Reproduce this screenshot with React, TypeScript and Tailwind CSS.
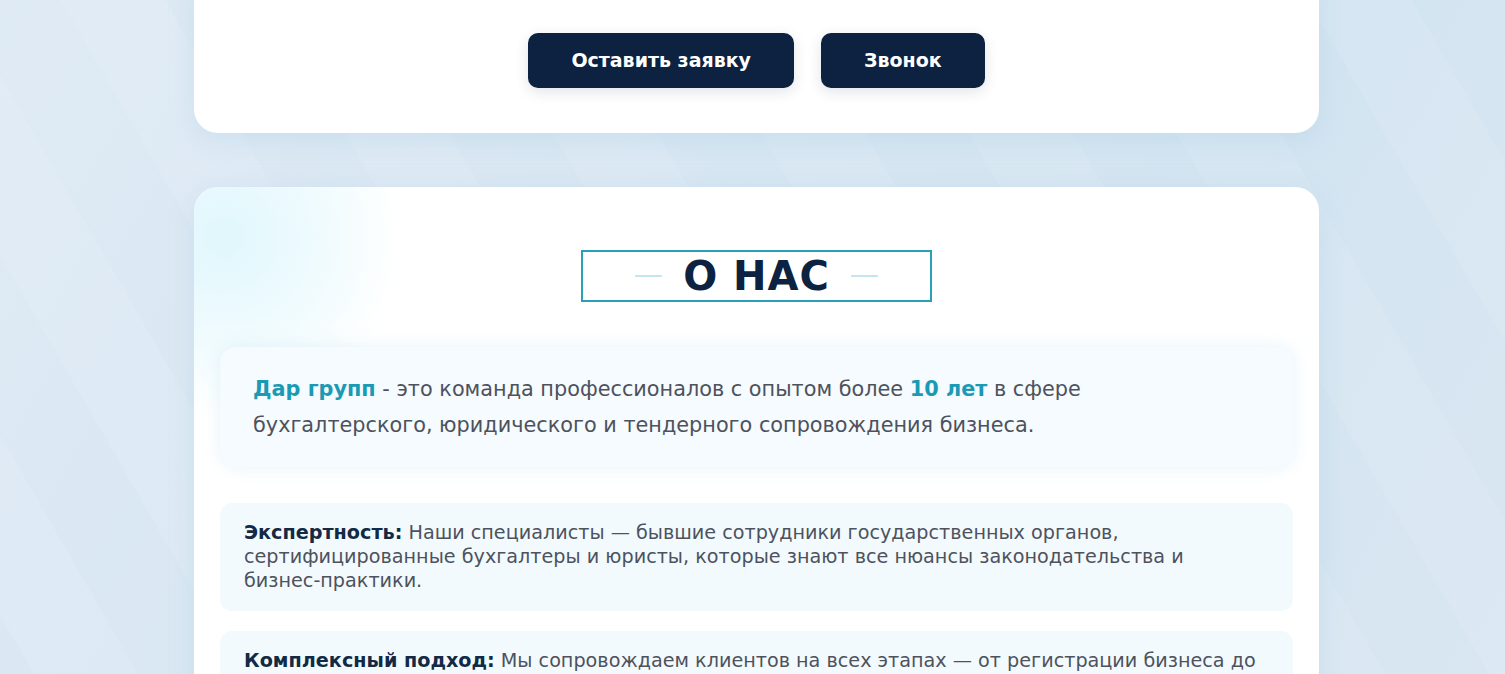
import React from 'react'

type Point = { label: string; text: string }

const points: Point[] = [
  {
    label: 'Экспертность:',
    text: 'Наши специалисты — бывшие сотрудники государственных органов, сертифицированные бухгалтеры и юристы, которые знают все нюансы законодательства и бизнес\u2011практики.',
  },
  {
    label: 'Комплексный подход:',
    text: 'Мы сопровождаем клиентов на всех этапах — от регистрации бизнеса до ликвидации, включая бухгалтерию, юридическую поддержку и участие в тендерах.',
  },
]

function ActionCard() {
  return (
    <section className="-mt-[40px] ml-[194px] w-[1125px] rounded-[24px] bg-white pt-[73px] pb-[45px] shadow-[0_6px_24px_rgba(150,195,225,0.25)]">
      <div className="flex justify-center gap-[27px]">
        <button className="h-[55px] rounded-[10px] bg-[#0c2240] px-[43px] text-[19px] font-bold text-white shadow-[0_4px_14px_rgba(12,34,64,0.12)]">
          Оставить заявку
        </button>
        <button className="h-[55px] rounded-[10px] bg-[#0c2240] px-[43px] text-[19px] font-bold text-white shadow-[0_4px_14px_rgba(12,34,64,0.12)]">
          Звонок
        </button>
      </div>
    </section>
  )
}

function AboutCard() {
  return (
    <section className="relative mt-[54px] ml-[194px] w-[1125px] overflow-hidden rounded-[24px] bg-white px-[26px] pt-[63px] pb-10 shadow-[0_6px_24px_rgba(150,195,225,0.25)]">
      {/* soft cyan glow in the corner */}
      <div className="pointer-events-none absolute -left-[150px] -top-[130px] h-[360px] w-[360px] rounded-full bg-[radial-gradient(circle,rgba(218,245,252,0.85)_0%,rgba(232,249,253,0.55)_45%,rgba(255,255,255,0)_70%)]" />

      <div className="relative flex justify-center">
        <h2 className="flex h-[52px] w-[351px] items-center justify-center gap-[21px] border-2 border-[#2a9fb8] text-[40px] font-bold tracking-[1px] text-[#0c2240]">
          <span className="h-[2px] w-[27px] bg-[#c4e6ef]" />
          <span className="leading-none">О НАС</span>
          <span className="h-[2px] w-[27px] bg-[#c4e6ef]" />
        </h2>
      </div>

      <div className="relative mt-[45px] rounded-[16px] bg-[#f5fbfe] px-[33px] py-6 text-[20.8px] leading-[36px] text-[#4d525d] shadow-[0_0_18px_rgba(200,228,242,0.45)]">
        <p className="max-w-[900px]">
          <span className="font-bold text-[#1a9ab5]">Дар групп</span> - это команда профессионалов с опытом более{' '}
          <span className="font-bold text-[#1a9ab5]">10 лет</span> в сфере бухгалтерского, юридического и тендерного
          сопровождения бизнеса.
        </p>
      </div>

      <div className="relative mt-9 flex flex-col gap-5">
        {points.map((p) => (
          <div
            key={p.label}
            className="rounded-[12px] bg-[#f2fafe] py-[18px] pr-4 pl-6 text-[19.2px] leading-[24px] text-[#4d525d]"
          >
            <span className="font-bold text-[#132a45]">{p.label}</span> {p.text}
          </div>
        ))}
      </div>
    </section>
  )
}

export default function App() {
  return (
    <div className="min-h-screen overflow-hidden bg-[linear-gradient(120deg,#dfeaf4_0%,#d6e6f2_45%,#d3e4f1_70%,#dae7f2_100%)] font-['DejaVu_Sans',sans-serif]">
      <div className="min-h-screen bg-[repeating-linear-gradient(60deg,rgba(255,255,255,0)_0px,rgba(255,255,255,0)_90px,rgba(255,255,255,0.08)_90px,rgba(255,255,255,0.08)_180px)] pb-10">
        <ActionCard />
        <AboutCard />
      </div>
    </div>
  )
}
